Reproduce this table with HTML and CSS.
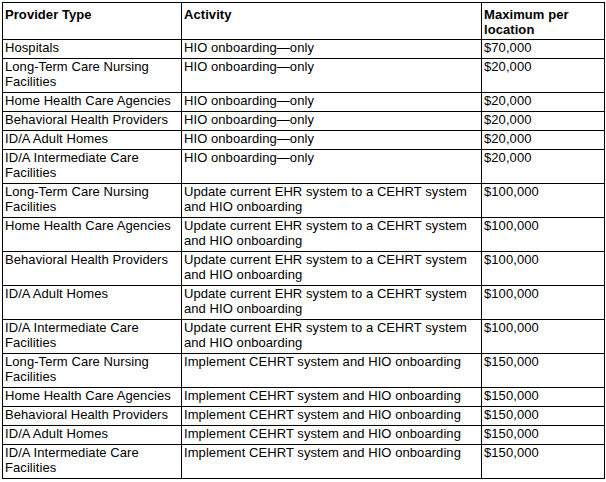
FILE: index.html
```html
<!DOCTYPE html>
<html lang="en">
<head>
<meta charset="utf-8">
<title>Provider funding</title>
<link rel="stylesheet" href="styles.css">
</head>
<body>
<table class="grid">
  <colgroup>
    <col class="c-type">
    <col class="c-act">
    <col class="c-max">
  </colgroup>
  <thead>
    <tr><th>Provider Type</th><th>Activity</th><th>Maximum per location</th></tr>
  </thead>
  <tbody>
    <tr><td>Hospitals</td><td>HIO onboarding—only</td><td>$70,000</td></tr>
    <tr><td>Long-Term Care Nursing Facilities</td><td>HIO onboarding—only</td><td>$20,000</td></tr>
    <tr><td>Home Health Care Agencies</td><td>HIO onboarding—only</td><td>$20,000</td></tr>
    <tr><td>Behavioral Health Providers</td><td>HIO onboarding—only</td><td>$20,000</td></tr>
    <tr><td>ID/A Adult Homes</td><td>HIO onboarding—only</td><td>$20,000</td></tr>
    <tr><td>ID/A Intermediate Care Facilities</td><td>HIO onboarding—only</td><td>$20,000</td></tr>
    <tr><td>Long-Term Care Nursing Facilities</td><td>Update current EHR system to a CEHRT system and HIO onboarding</td><td>$100,000</td></tr>
    <tr><td>Home Health Care Agencies</td><td>Update current EHR system to a CEHRT system and HIO onboarding</td><td>$100,000</td></tr>
    <tr><td>Behavioral Health Providers</td><td>Update current EHR system to a CEHRT system and HIO onboarding</td><td>$100,000</td></tr>
    <tr><td>ID/A Adult Homes</td><td>Update current EHR system to a CEHRT system and HIO onboarding</td><td>$100,000</td></tr>
    <tr><td>ID/A Intermediate Care Facilities</td><td>Update current EHR system to a CEHRT system and HIO onboarding</td><td>$100,000</td></tr>
    <tr><td>Long-Term Care Nursing Facilities</td><td>Implement CEHRT system and HIO onboarding</td><td>$150,000</td></tr>
    <tr><td>Home Health Care Agencies</td><td>Implement CEHRT system and HIO onboarding</td><td>$150,000</td></tr>
    <tr><td>Behavioral Health Providers</td><td>Implement CEHRT system and HIO onboarding</td><td>$150,000</td></tr>
    <tr><td>ID/A Adult Homes</td><td>Implement CEHRT system and HIO onboarding</td><td>$150,000</td></tr>
    <tr><td>ID/A Intermediate Care Facilities</td><td>Implement CEHRT system and HIO onboarding</td><td>$150,000</td></tr>
  </tbody>
</table>
</body>
</html>
```

FILE: styles.css
```css
html, body {
  background: #ffffff;
}
body {
  margin: 2px 0 0 2px;
  font-family: "Liberation Sans", Arial, sans-serif;
  font-size: 13px;
  line-height: 15px;
  letter-spacing: 0.07px;
  color: #000000;
}
.grid {
  width: 602px;
  table-layout: fixed;
  border-collapse: collapse;
}
.c-type { width: 179px; }
.c-act { width: 300px; }
.c-max { width: 123px; }
.grid th,
.grid td {
  border: 1px solid #000000;
  text-align: left;
  vertical-align: top;
  padding: 0 2px 3px 2px;
}
.grid th {
  font-weight: bold;
  padding: 4px 2px 2px 2px;
}
```
